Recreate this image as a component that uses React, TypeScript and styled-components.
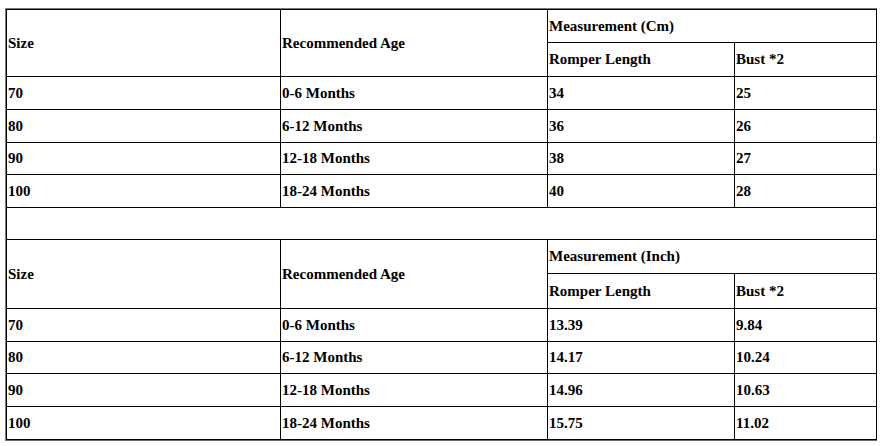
import React from 'react';
import styled, { createGlobalStyle } from 'styled-components';

const GlobalStyle = createGlobalStyle`
  html, body {
    margin: 0;
    padding: 0;
    background: #ffffff;
  }
  body {
    padding: 8px 0 0 5px;
    font-family: 'Liberation Serif', serif;
  }
`;

const Frame = styled.div`
  width: 870px;
  border: 1px solid #7a7a7a;
  border-right-color: #6e6e6e;
  border-bottom-color: #6e6e6e;
`;

const Table = styled.table`
  width: 870px;
  border-collapse: collapse;
  table-layout: fixed;
  font-family: 'Liberation Serif', serif;
  font-size: 15px;
  font-weight: 700;
  color: #000;
`;

const Row = styled.tr<{ $h: number }>`
  height: ${({ $h }) => $h}px;
`;

const Cell = styled.td`
  border: 1px solid #000;
  padding: 0 1px;
  text-align: left;
  vertical-align: middle;
  white-space: nowrap;
  line-height: 17px;
`;

const Spacer = styled.td`
  border: 1px solid #000;
  padding: 0;
`;

interface Block {
  unit: string;
  heads: [number, number];
  rows: { h: number; values: [string, string, string, string] }[];
}

const blocks: Block[] = [
  {
    unit: 'Cm',
    heads: [33, 34],
    rows: [
      { h: 33, values: ['70', '0-6 Months', '34', '25'] },
      { h: 33, values: ['80', '6-12 Months', '36', '26'] },
      { h: 32, values: ['90', '12-18 Months', '38', '27'] },
      { h: 33, values: ['100', '18-24 Months', '40', '28'] },
    ],
  },
  {
    unit: 'Inch',
    heads: [34, 35],
    rows: [
      { h: 33, values: ['70', '0-6 Months', '13.39', '9.84'] },
      { h: 32, values: ['80', '6-12 Months', '14.17', '10.24'] },
      { h: 33, values: ['90', '12-18 Months', '14.96', '10.63'] },
      { h: 33, values: ['100', '18-24 Months', '15.75', '11.02'] },
    ],
  },
];

const SizeBlock = ({ block }: { block: Block }) => (
  <>
    <Row $h={block.heads[0]}>
      <Cell rowSpan={2}>Size</Cell>
      <Cell rowSpan={2}>Recommended Age</Cell>
      <Cell colSpan={2}>Measurement ({block.unit})</Cell>
    </Row>
    <Row $h={block.heads[1]}>
      <Cell>Romper Length</Cell>
      <Cell>Bust *2</Cell>
    </Row>
    {block.rows.map((row) => (
      <Row $h={row.h} key={row.values[0]}>
        {row.values.map((value, i) => (
          <Cell key={i}>{value}</Cell>
        ))}
      </Row>
    ))}
  </>
);

export default function App() {
  return (
    <>
      <GlobalStyle />
      <Frame>
        <Table>
          <colgroup>
            <col style={{ width: 274 }} />
            <col style={{ width: 267 }} />
            <col style={{ width: 187 }} />
            <col style={{ width: 142 }} />
          </colgroup>
          <tbody>
            <SizeBlock block={blocks[0]} />
            <Row $h={32}>
              <Spacer colSpan={4} />
            </Row>
            <SizeBlock block={blocks[1]} />
          </tbody>
        </Table>
      </Frame>
    </>
  );
}
